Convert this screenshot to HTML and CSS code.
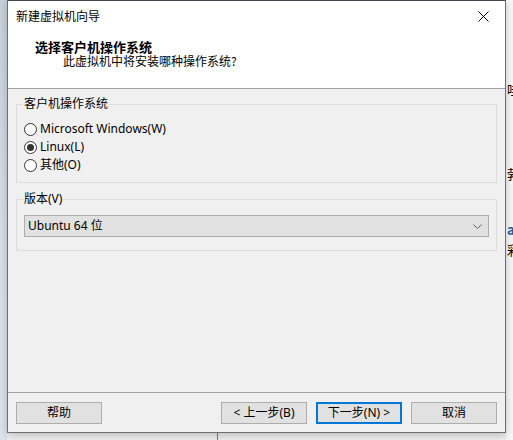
FILE: index.html
```html
<!DOCTYPE html>
<html lang="zh-CN">
<head>
<meta charset="utf-8">
<title>新建虚拟机向导</title>
<link rel="stylesheet" href="styles.css">
</head>
<body>
<div class="desktop">
  <div class="left-edge"></div>
  <div class="dialog">
    <div class="top">
      <div class="titlebar">
        <span class="title">新建虚拟机向导</span>
        <span class="close">
          <svg width="11" height="11" viewBox="0 0 11 11"><path d="M0.5 0.5L10.5 10.5M10.5 0.5L0.5 10.5" stroke="#000" stroke-width="1" fill="none"/></svg>
        </span>
      </div>
      <div class="header">
        <div class="h-title">选择客户机操作系统</div>
        <div class="h-sub">此虚拟机中将安装哪种操作系统?</div>
      </div>
    </div>
    <div class="content">
      <fieldset class="group g-os">
        <legend>客户机操作系统</legend>
        <div class="radio"><span class="circle"></span><span>Microsoft Windows(W)</span></div>
        <div class="radio"><span class="circle checked"></span><span>Linux(L)</span></div>
        <div class="radio"><span class="circle"></span><span>其他(O)</span></div>
      </fieldset>
      <fieldset class="group g-ver">
        <legend>版本(V)</legend>
        <div class="select">
          <span>Ubuntu 64 位</span>
          <svg width="9" height="5" viewBox="0 0 9 5"><path d="M0.5 0.5L4.5 4.5L8.5 0.5" stroke="#606060" stroke-width="1" fill="none"/></svg>
        </div>
      </fieldset>
    </div>
    <div class="footer">
      <button class="btn">帮助</button>
      <button class="btn push">&lt; 上一步(B)</button>
      <button class="btn default">下一步(N) &gt;</button>
      <button class="btn">取消</button>
    </div>
  </div>
  <div class="right-edge">
    <div class="bg-ch c1">哇</div>
    <div class="bg-ch c2">勃</div>
    <div class="bg-ch c3">a</div>
    <div class="bg-ch c4">彩</div>
  </div>
</div>
</body>
</html>
```

FILE: styles.css
```css
* { box-sizing: border-box; }
html, body { margin: 0; padding: 0; }
body {
  font-family: "Noto Sans", "Noto Sans CJK SC", sans-serif;
  font-size: 12px;
  color: #000;
  background: #f2f2f2;
}
.desktop {
  width: 513px;
  height: 440px;
  display: flex;
  align-items: flex-start;
  overflow: hidden;
  background:
    linear-gradient(to right, transparent 217px, #7a7a7a 217px, #7a7a7a 218px, transparent 218px),
    #eeeeee;
}
.left-edge {
  width: 7px;
  height: 440px;
  flex: none;
  background: linear-gradient(to bottom, #c7d0db, #d9e0e8 60%, #dde3ea);
}
.dialog {
  width: 499px;
  height: 433px;
  flex: none;
  display: flex;
  flex-direction: column;
  border: 1px solid #6e6e6e;
  border-top-color: #3d4756;
  background: #f0f0f0;
  box-shadow: 0 2px 8px rgba(0, 0, 0, 0.22);
  position: relative;
  z-index: 1;
}
.top {
  background: #ffffff;
  border-bottom: 1px solid #a0a0a0;
  height: 88px;
  flex: none;
}
.titlebar {
  height: 30px;
  display: flex;
  align-items: center;
  justify-content: space-between;
  padding-left: 8px;
}
.title {
  font-family: "Noto Sans CJK SC", sans-serif;
  font-size: 12px;
  line-height: 14px;
}
.close {
  width: 46px;
  height: 30px;
  display: flex;
  align-items: center;
  justify-content: center;
  margin-right: -1px;
}
.close svg { display: block; }
.header {
  padding-top: 9px;
}
.h-title {
  font-family: "Noto Sans CJK SC", sans-serif;
  font-weight: bold;
  font-size: 13px;
  line-height: 14px;
  padding-left: 27px;
}
.h-sub {
  font-family: "Noto Sans CJK SC", sans-serif;
  font-size: 12px;
  line-height: 14px;
  padding-left: 55px;
}
.content {
  flex: 1;
  padding: 8px 8px 0;
}
.group {
  margin: 0;
  min-width: 0;
  border: 1px solid #dcdcdc;
  padding: 9px 7px 8px;
}
.group legend {
  padding: 0 1px;
  margin-left: -1px;
  line-height: 14px;
  font-size: 12px;
}
.g-ver {
  margin-top: 9px;
  padding-bottom: 13px;
}
.radio {
  height: 18px;
  display: flex;
  align-items: center;
  gap: 3px;
  line-height: 14px;
}
.circle {
  width: 13px;
  height: 13px;
  border: 1px solid #333333;
  border-radius: 50%;
  background: #ffffff;
  display: flex;
  align-items: center;
  justify-content: center;
  flex: none;
}
.circle.checked::after {
  content: "";
  width: 7px;
  height: 7px;
  border-radius: 50%;
  background: #333333;
}
.select {
  height: 22px;
  border: 1px solid #adadad;
  background: #e1e1e1;
  display: flex;
  align-items: center;
  justify-content: space-between;
  padding: 0 6px 0 3px;
  line-height: 14px;
}
.select svg { display: block; }
.footer {
  flex: none;
  height: 40px;
  border-top: 1px solid #a0a0a0;
  padding: 9px 8px 0;
  display: flex;
  align-items: flex-start;
  gap: 9px;
}
.btn {
  width: 86px;
  height: 22px;
  border: 1px solid #adadad;
  background: #e1e1e1;
  font-family: "Noto Sans", "Noto Sans CJK SC", sans-serif;
  font-size: 12px;
  line-height: 14px;
  color: #000;
  padding: 0;
  margin: 0;
}
.btn.push { margin-left: auto; }
.btn.default {
  border: 2px solid #0078d7;
}
.right-edge {
  width: 7px;
  height: 440px;
  flex: none;
  overflow: hidden;
  background: #f7f7f7;
  font-family: "Noto Sans CJK SC", sans-serif;
  font-size: 13px;
  line-height: 14px;
  white-space: nowrap;
}
.bg-ch { padding-left: 1px; height: 14px; }
.c1 { margin-top: 83px; }
.c2 { margin-top: 70px; }
.c3 { margin-top: 42px; color: #1f5fa8; font-weight: bold; }
.c4 { margin-top: 6px; }
```
